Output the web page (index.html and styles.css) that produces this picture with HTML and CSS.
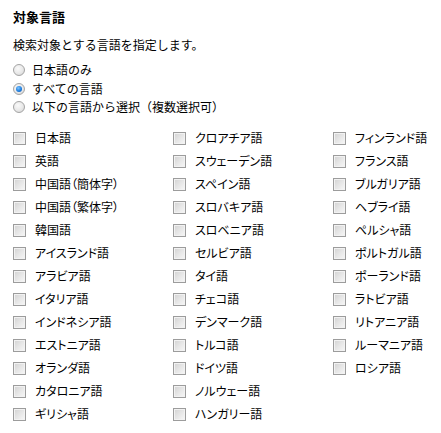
FILE: index.html
```html
<!DOCTYPE html>
<html lang="ja">
<head>
<meta charset="utf-8">
<link rel="stylesheet" href="styles.css">
</head>
<body>
<div class="panel">
  <h2 class="title">対象言語</h2>
  <p class="desc">検索対象とする言語を指定します。</p>
  <div class="radios">
    <label class="radio-row"><span class="radio"></span>日本語のみ</label>
    <label class="radio-row"><span class="radio checked"></span>すべての言語</label>
    <label class="radio-row"><span class="radio"></span>以下の言語から選択（複数選択可）</label>
  </div>
  <div class="langs">
    <label class="lang"><span class="cb"></span>日本語</label>
    <label class="lang"><span class="cb"></span>英語</label>
    <label class="lang"><span class="cb"></span>中国語（簡体字）</label>
    <label class="lang"><span class="cb"></span>中国語（繁体字）</label>
    <label class="lang"><span class="cb"></span>韓国語</label>
    <label class="lang"><span class="cb"></span>アイスランド語</label>
    <label class="lang"><span class="cb"></span>アラビア語</label>
    <label class="lang"><span class="cb"></span>イタリア語</label>
    <label class="lang"><span class="cb"></span>インドネシア語</label>
    <label class="lang"><span class="cb"></span>エストニア語</label>
    <label class="lang"><span class="cb"></span>オランダ語</label>
    <label class="lang"><span class="cb"></span>カタロニア語</label>
    <label class="lang"><span class="cb"></span>ギリシャ語</label>
    <label class="lang"><span class="cb"></span>クロアチア語</label>
    <label class="lang"><span class="cb"></span>スウェーデン語</label>
    <label class="lang"><span class="cb"></span>スペイン語</label>
    <label class="lang"><span class="cb"></span>スロバキア語</label>
    <label class="lang"><span class="cb"></span>スロベニア語</label>
    <label class="lang"><span class="cb"></span>セルビア語</label>
    <label class="lang"><span class="cb"></span>タイ語</label>
    <label class="lang"><span class="cb"></span>チェコ語</label>
    <label class="lang"><span class="cb"></span>デンマーク語</label>
    <label class="lang"><span class="cb"></span>トルコ語</label>
    <label class="lang"><span class="cb"></span>ドイツ語</label>
    <label class="lang"><span class="cb"></span>ノルウェー語</label>
    <label class="lang"><span class="cb"></span>ハンガリー語</label>
    <label class="lang"><span class="cb"></span>フィンランド語</label>
    <label class="lang"><span class="cb"></span>フランス語</label>
    <label class="lang"><span class="cb"></span>ブルガリア語</label>
    <label class="lang"><span class="cb"></span>ヘブライ語</label>
    <label class="lang"><span class="cb"></span>ペルシャ語</label>
    <label class="lang"><span class="cb"></span>ポルトガル語</label>
    <label class="lang"><span class="cb"></span>ポーランド語</label>
    <label class="lang"><span class="cb"></span>ラトビア語</label>
    <label class="lang"><span class="cb"></span>リトアニア語</label>
    <label class="lang"><span class="cb"></span>ルーマニア語</label>
    <label class="lang"><span class="cb"></span>ロシア語</label>
  </div>
</div>
</body>
</html>
```

FILE: styles.css
```css
html, body {
  margin: 0;
  padding: 0;
  background: #fff;
}
body {
  font-family: "Noto Sans CJK JP", "Noto Sans", sans-serif;
  font-size: 12px;
  color: #000;
}
.panel {
  padding: 9px 13px 0 13px;
}
.title {
  margin: 0;
  font-size: 13px;
  font-weight: bold;
  line-height: 16px;
}
.desc {
  margin: 12px 0 0 0;
  line-height: 16px;
}
.radios {
  display: flex;
  flex-direction: column;
  margin-top: 8px;
}
.radio-row {
  display: flex;
  align-items: center;
  gap: 7px;
  height: 18.5px;
  line-height: 16px;
}
.radio {
  box-sizing: border-box;
  width: 12px;
  height: 12px;
  border-radius: 50%;
  border: 1px solid #a4a4a4;
  background: radial-gradient(circle at 40% 35%, #fafafa 0%, #e8e8e8 55%, #d0d0d0 100%);
  display: flex;
  align-items: center;
  justify-content: center;
  flex: none;
}
.radio.checked::after {
  content: "";
  width: 6px;
  height: 6px;
  border-radius: 50%;
  background: radial-gradient(circle at 40% 35%, #7cc4ff 0%, #1f7fe0 55%, #0b4fa8 100%);
}
.langs {
  display: grid;
  grid-template-columns: 160px 160px auto;
  grid-template-rows: repeat(13, 23px);
  grid-auto-flow: column;
  margin-top: 10px;
  font-feature-settings: "palt";
}
.lang {
  display: flex;
  align-items: center;
  gap: 9px;
  line-height: 16px;
  white-space: nowrap;
}
.cb {
  box-sizing: border-box;
  width: 13px;
  height: 13px;
  border: 1px solid #9c9c9c;
  background: linear-gradient(135deg, #d2d2d2 0%, #e6e6e6 50%, #f7f7f7 100%);
  box-shadow: inset 0 0 0 1px #f2f2f2;
  flex: none;
}
```
